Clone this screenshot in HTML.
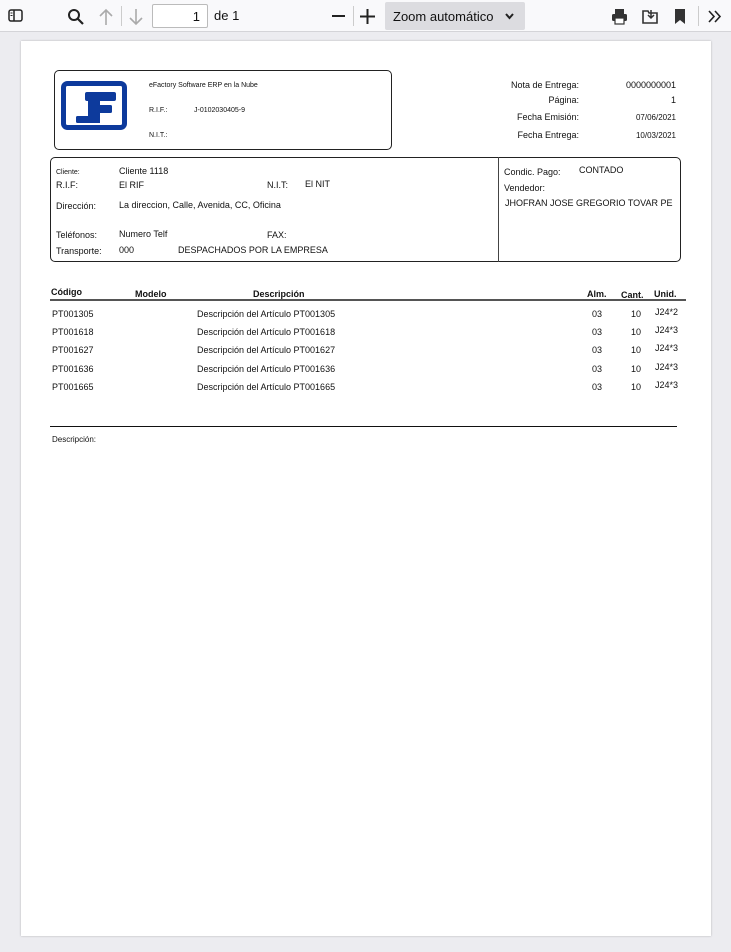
<!DOCTYPE html>
<html><head><meta charset="utf-8"><style>
*{margin:0;padding:0;box-sizing:border-box}
body{width:731px;height:952px;background:#ececf0;font-family:"Liberation Sans",sans-serif;position:relative;overflow:hidden;color:#111}
.tb{position:absolute;left:0;top:0;width:731px;height:32px;background:#f9f9fb;border-bottom:1px solid #d4d4d8}
.a{position:absolute;white-space:nowrap}
.page{position:absolute;left:21px;top:41px;width:690px;height:895px;background:#fff;box-shadow:0 0 2px rgba(0,0,0,.25)}
.s9{font-size:9px}.s8{font-size:8px}.s7{font-size:7px}
.b{font-weight:bold}
</style></head><body>
<div class="tb">
<svg class="a" style="left:8px;top:9px" width="16" height="14"><rect x="1" y="1" width="13" height="11" rx="2" fill="none" stroke="#222" stroke-width="1.5"/><line x1="6" y1="1" x2="6" y2="12" stroke="#222" stroke-width="1.5"/><line x1="2.5" y1="4" x2="4.5" y2="4" stroke="#222"/><line x1="2.5" y1="6.5" x2="4.5" y2="6.5" stroke="#222"/></svg>
<svg class="a" style="left:67px;top:8px" width="18" height="18"><circle cx="7" cy="7" r="5" fill="none" stroke="#222" stroke-width="2"/><line x1="10.5" y1="10.5" x2="16" y2="16" stroke="#222" stroke-width="2.2"/></svg>
<svg class="a" style="left:98px;top:8px" width="16" height="18"><path d="M8 2V17M2 8L8 2L14 8" fill="none" stroke="#aaa" stroke-width="1.6"/></svg>
<div class="a" style="left:121px;top:6px;width:1px;height:20px;background:#ccc"></div>
<svg class="a" style="left:128px;top:8px" width="16" height="18"><path d="M8 1V16M2 10L8 16L14 10" fill="none" stroke="#aaa" stroke-width="1.6"/></svg>
<div class="a" style="left:152px;top:4px;width:56px;height:24px;border:1px solid #bbb;border-radius:2px;background:#fff;font-size:13px;text-align:right;padding:4px 7px 0 0">1</div>
<div class="a" style="left:214px;top:8px;font-size:13px">de 1</div>
<div class="a" style="left:332px;top:15px;width:13px;height:2px;background:#222"></div>
<div class="a" style="left:353px;top:6px;width:1px;height:20px;background:#ccc"></div>
<svg class="a" style="left:360px;top:9px" width="15" height="15"><path d="M7.5 0V15M0 7.5H15" stroke="#222" stroke-width="2"/></svg>
<div class="a" style="left:385px;top:2px;width:140px;height:28px;background:#dcdce0;border-radius:2px;font-size:13px;padding:7px 0 0 8px">Zoom automático<svg class="a" style="left:120px;top:11px" width="9" height="7"><path d="M1 1L4.5 5L8 1" fill="none" stroke="#222" stroke-width="2"/></svg></div>
<svg class="a" style="left:611px;top:8px" width="17" height="17"><rect x="4" y="1" width="9" height="5" fill="#333"/><rect x="1" y="6" width="15" height="7" rx="1.5" fill="#333"/><rect x="4" y="10" width="9" height="6" fill="#fff" stroke="#333" stroke-width="1.2"/></svg>
<svg class="a" style="left:642px;top:8px" width="17" height="17"><path d="M1 3H6L7 5H15V15H1Z" fill="none" stroke="#333" stroke-width="1.6"/><path d="M9 2V10M6 7L9 10L12 7" fill="none" stroke="#333" stroke-width="1.5"/></svg>
<svg class="a" style="left:674px;top:8px" width="12" height="17"><path d="M1 1H11V16L6 12L1 16Z" fill="#333"/></svg>
<div class="a" style="left:698px;top:6px;width:1px;height:20px;background:#ccc"></div>
<svg class="a" style="left:708px;top:10px" width="14" height="13"><path d="M1 1L6 6.5L1 12M7 1L12 6.5L7 12" fill="none" stroke="#222" stroke-width="1.6"/></svg>
</div>

<div class="page">
<div class="a" style="left:33px;top:29px;width:338px;height:80px;border:1px solid #222;border-radius:5px"></div>
<svg class="a" style="left:40px;top:40px" width="67" height="50"><rect x="2.5" y="2.5" width="61" height="44" rx="4" fill="none" stroke="#0d3a9c" stroke-width="5"/><rect x="24" y="11" width="31" height="9" rx="2" fill="#0d3a9c"/><rect x="27" y="11" width="12" height="31" fill="#0d3a9c"/><rect x="36" y="24" width="15" height="8" rx="1.5" fill="#0d3a9c"/><rect x="15" y="35" width="24" height="7" rx="1.5" fill="#0d3a9c"/></svg>
<div class="a s7" style="left:128px;top:41px">eFactory Software ERP en la Nube</div>
<div class="a s7" style="left:128px;top:66px">R.I.F.:</div>
<div class="a s7" style="left:173px;top:66px">J-0102030405-9</div>
<div class="a s7" style="left:128px;top:91px">N.I.T.:</div>

<div class="a s9" style="left:468px;top:39px;width:90px;text-align:right">Nota de Entrega:</div>
<div class="a s9" style="left:590px;top:39px;width:65px;text-align:right">0000000001</div>
<div class="a s9" style="left:468px;top:54px;width:90px;text-align:right">Página:</div>
<div class="a s9" style="left:590px;top:54px;width:65px;text-align:right">1</div>
<div class="a s9" style="left:468px;top:71px;width:90px;text-align:right">Fecha Emisión:</div>
<div class="a s8" style="left:590px;top:72px;width:65px;text-align:right">07/06/2021</div>
<div class="a s9" style="left:468px;top:89px;width:90px;text-align:right">Fecha Entrega:</div>
<div class="a s8" style="left:590px;top:90px;width:65px;text-align:right">10/03/2021</div>

<div class="a" style="left:29px;top:116px;width:631px;height:105px;border:1px solid #222;border-radius:5px"></div>
<div class="a" style="left:477px;top:116px;width:1px;height:105px;background:#444"></div>
<div class="a s7" style="left:35px;top:128px">Cliente:</div>
<div class="a s9" style="left:98px;top:125px">Cliente 1118</div>
<div class="a s9" style="left:35px;top:139px">R.I.F:</div>
<div class="a s9" style="left:98px;top:139px">El RIF</div>
<div class="a s9" style="left:246px;top:139px">N.I.T:</div>
<div class="a s9" style="left:284px;top:138px">El NIT</div>
<div class="a s9" style="left:35px;top:160px">Dirección:</div>
<div class="a s9" style="left:98px;top:159px">La direccion, Calle, Avenida, CC, Oficina</div>
<div class="a s9" style="left:35px;top:189px">Teléfonos:</div>
<div class="a s9" style="left:98px;top:188px">Numero Telf</div>
<div class="a s9" style="left:246px;top:189px">FAX:</div>
<div class="a s9" style="left:35px;top:205px">Transporte:</div>
<div class="a s9" style="left:98px;top:204px">000</div>
<div class="a s9" style="left:157px;top:204px">DESPACHADOS POR LA EMPRESA</div>
<div class="a s9" style="left:483px;top:126px">Condic. Pago:</div>
<div class="a s9" style="left:558px;top:124px">CONTADO</div>
<div class="a s9" style="left:483px;top:142px">Vendedor:</div>
<div class="a s9" style="left:484px;top:157px">JHOFRAN JOSE GREGORIO TOVAR PE</div>

<div class="a s9 b" style="left:30px;top:246px">Código</div>
<div class="a s9 b" style="left:114px;top:248px">Modelo</div>
<div class="a s9 b" style="left:232px;top:248px">Descripción</div>
<div class="a s9 b" style="left:566px;top:248px">Alm.</div>
<div class="a s9 b" style="left:600px;top:249px">Cant.</div>
<div class="a s9 b" style="left:633px;top:248px">Unid.</div>
<div class="a" style="left:29px;top:258px;width:636px;height:2px;background:#555"></div>

<div class="a s9" style="left:31px;top:264px;line-height:18.2px">PT001305<br>PT001618<br>PT001627<br>PT001636<br>PT001665</div>
<div class="a s9" style="left:176px;top:264px;line-height:18.2px">Descripción del Artículo PT001305<br>Descripción del Artículo PT001618<br>Descripción del Artículo PT001627<br>Descripción del Artículo PT001636<br>Descripción del Artículo PT001665</div>
<div class="a s9" style="left:571px;top:264px;line-height:18.2px">03<br>03<br>03<br>03<br>03</div>
<div class="a s9" style="left:610px;top:264px;line-height:18.2px">10<br>10<br>10<br>10<br>10</div>
<div class="a s9" style="left:634px;top:262px;line-height:18.2px">J24*2<br>J24*3<br>J24*3<br>J24*3<br>J24*3</div>

<div class="a" style="left:29px;top:385px;width:627px;height:1px;background:#111"></div>
<div class="a s8" style="left:31px;top:394px">Descripción:</div>
</div>
</body></html>
